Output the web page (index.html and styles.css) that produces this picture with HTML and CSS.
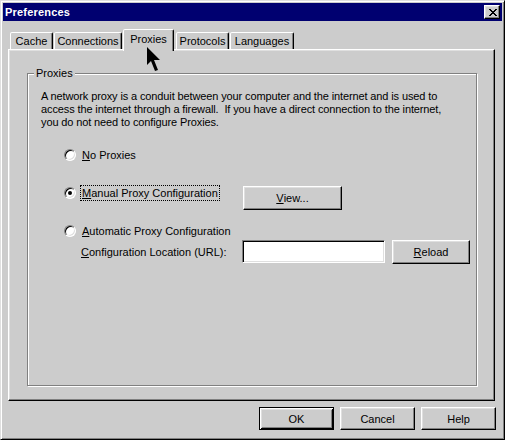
FILE: index.html
```html
<!DOCTYPE html>
<html>
<head>
<meta charset="utf-8">
<link rel="stylesheet" href="styles.css">
</head>
<body>
<div class="window">
  <div class="titlebar">
    <span class="title">Preferences</span>
    <span class="close"><svg width="8" height="7" viewBox="0 0 8 7"><path d="M0 0h2v1h1v1h2v-1h1v-1h2v1h-1v1h-1v1h-1v1h1v1h1v1h1v1h-2v-1h-1v-1h-2v1h-1v1h-2v-1h1v-1h1v-1h1v-1h-1v-1h-1v-1h-1z" fill="#000"/></svg></span>
  </div>
  <div class="tabs">
    <div class="tab tab-cache">Cache</div>
    <div class="tab tab-conn">Connections</div>
    <div class="tab tab-active">Proxies</div>
    <div class="tab tab-proto">Protocols</div>
    <div class="tab tab-lang">Languages</div>
  </div>
  <div class="panel">
    <div class="group">
      <span class="legend">Proxies</span>
      <p class="desc">A network proxy is a conduit between your computer and the internet and is used to access the internet through a firewall.&nbsp; If you have a direct connection to the internet, you do not need to configure Proxies.</p>
      <div class="row row-no">
        <span class="radio"></span>
        <span class="label"><u>N</u>o Proxies</span>
      </div>
      <div class="row row-manual">
        <div class="opt">
          <span class="radio checked"></span>
          <span class="label focus"><u>M</u>anual Proxy Configuration</span>
        </div>
        <button class="btn btn-view"><u>V</u>iew...</button>
      </div>
      <div class="row row-auto">
        <span class="radio"></span>
        <span class="label"><u>A</u>utomatic Proxy Configuration</span>
      </div>
      <div class="row row-url">
        <span class="url-label"><u>C</u>onfiguration Location (URL):</span>
        <span class="input"></span>
        <button class="btn btn-reload"><u>R</u>eload</button>
      </div>
    </div>
  </div>
  <div class="actions">
    <button class="btn btn-action btn-default">OK</button>
    <button class="btn btn-action">Cancel</button>
    <button class="btn btn-action">Help</button>
  </div>
  <svg class="cursor" width="14" height="25" viewBox="0 0 14 25"><path d="M0 0L0 18L4 14L8 24L11 23L7 13L13 13Z" fill="#000"/></svg>
</div>
</body>
</html>
```
FILE: styles.css
```css
* { box-sizing: border-box; }
html, body { margin: 0; padding: 0; background: #cccccc; }
body {
  font-family: "Liberation Sans", Arial, sans-serif;
  font-size: 11px;
  color: #000;
}
.window {
  position: relative;
  width: 505px;
  height: 440px;
  background: #cccccc;
  border: 1px solid;
  border-color: #dfdfdf #000 #000 #dfdfdf;
  box-shadow: inset 1px 1px #fff, inset -1px -1px #808080;
  padding: 2px;
  display: flex;
  flex-direction: column;
  align-items: flex-start;
}
.titlebar {
  width: 499px;
  height: 18px;
  background: #000070;
  color: #fff;
  display: flex;
  align-items: center;
  justify-content: space-between;
  padding: 0 2px 0 2px;
}
.title {
  font-weight: bold;
  font-size: 11px;
  letter-spacing: 0.2px;
}
.close {
  width: 16px;
  height: 14px;
  background: #cccccc;
  border: 1px solid;
  border-color: #fff #000 #000 #fff;
  box-shadow: inset -1px -1px #808080, inset 1px 1px #dfdfdf;
  display: flex;
  align-items: center;
  justify-content: center;
  padding-left: 1px;
}
.close svg { display: block; }
.tabs {
  display: flex;
  align-items: flex-end;
  height: 28px;
  padding-left: 7px;
  position: relative;
  z-index: 1;
}
.tab {
  flex: none;
  height: 17px;
  border: 1px solid;
  border-bottom: none;
  border-color: #fff #000 transparent #fff;
  border-radius: 2px 2px 0 0;
  box-shadow: inset -1px 0 #808080;
  display: flex;
  align-items: center;
  justify-content: center;
  padding-bottom: 1px;
  background: #cccccc;
}
.tab-cache { width: 43px; }
.tab-conn { width: 68px; margin-left: 1px; }
.tab-active {
  width: 51px;
  height: 22px;
  margin: 0 0 -2px 1px;
  padding-bottom: 4px;
}
.tab-proto { width: 53px; margin-left: 2px; }
.tab-lang { width: 64px; margin-left: 1px; }
.panel {
  width: 487px;
  height: 352px;
  margin-left: 5px;
  border: 1px solid;
  border-color: #fff #000 #000 #fff;
  box-shadow: inset -1px -1px #808080, inset 1px 1px #dfdfdf;
  padding: 23px 0 14px 18px;
}
.group {
  position: relative;
  width: 450px;
  height: 313px;
  border: 1px solid #808080;
  box-shadow: inset 1px 1px #fff, 1px 1px #fff;
  padding: 16px 24px 0 13px;
}
.legend {
  position: absolute;
  top: -7px;
  left: 6px;
  padding: 0 2px 0 2px;
  background: #cccccc;
  line-height: 13px;
}
.desc {
  margin: 0;
  line-height: 13px;
  letter-spacing: -0.12px;
}
.row {
  display: flex;
  align-items: center;
  margin-left: 23px;
}
.row > * { flex: none; }
.row-no { height: 16px; margin-top: 18px; }
.row-manual { height: 24px; margin-top: 22px; align-items: flex-start; }
.row-auto { height: 16px; margin-top: 14px; }
.row-url { height: 23px; margin-top: 1px; }
.opt {
  display: flex;
  align-items: center;
  height: 16px;
  width: 179px;
}
.radio {
  position: relative;
  width: 12px;
  height: 12px;
  border-radius: 50%;
  background: #fff;
  border: 1px solid;
  border-color: #808080 #fff #fff #808080;
  box-shadow: inset 1px 1px #000, inset -1px -1px #dfdfdf;
  flex: none;
  margin-right: 4px;
}
.radio.checked::after {
  content: "";
  position: absolute;
  left: 3px;
  top: 3px;
  width: 4px;
  height: 4px;
  border-radius: 50%;
  background: #000;
}
.label {
  line-height: 14px;
  padding: 0 1px;
  border: 1px solid transparent;
}
.label.focus { border: 1px dotted #000; }
.url-label {
  width: 162px;
  margin-left: 16px;
  padding-left: 1px;
  white-space: nowrap;
}
.input {
  width: 143px;
  height: 23px;
  background: #fff;
  border: 1px solid;
  border-color: #808080 #fff #fff #808080;
  box-shadow: inset 1px 1px #000, inset -1px -1px #dfdfdf;
}
.btn {
  font-family: "Liberation Sans", Arial, sans-serif;
  font-size: 11px;
  color: #000;
  background: #cccccc;
  border: 1px solid;
  border-color: #fff #000 #000 #fff;
  box-shadow: inset -1px -1px #808080, inset 1px 1px #dfdfdf;
  padding: 0;
  margin: 0;
  display: flex;
  align-items: center;
  justify-content: center;
}
.btn-view { width: 99px; height: 24px; margin-top: 1px; }
.btn-reload { width: 78px; height: 24px; margin-left: 7px; }
.actions {
  align-self: stretch;
  display: flex;
  justify-content: flex-end;
  gap: 6px;
  margin-top: 6px;
  padding-right: 6px;
}
.btn-action { width: 75px; height: 23px; flex: none; }
.btn-default {
  border: 1px solid #000;
  box-shadow: inset 1px 1px #fff, inset -1px -1px #000, inset 2px 2px #dfdfdf, inset -2px -2px #808080;
}
.cursor {
  position: absolute;
  left: 146px;
  top: 46px;
  z-index: 5;
}
```
